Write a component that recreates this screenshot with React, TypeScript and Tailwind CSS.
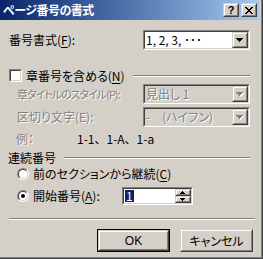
const face = "#D4D0C8";

function Sunken({ className = "", inner = "", children }: { className?: string; inner?: string; children?: React.ReactNode }) {
  return (
    <div className={`border border-t-[#808080] border-l-[#808080] border-b-white border-r-white ${className}`}>
      <div className={`h-full border border-t-[#404040] border-l-[#404040] border-b-[#D4D0C8] border-r-[#D4D0C8] ${inner}`}>
        {children}
      </div>
    </div>
  );
}

function Raised({ className = "", children }: { className?: string; children?: React.ReactNode }) {
  return (
    <div className={`border border-t-[#D4D0C8] border-l-[#D4D0C8] border-b-[#404040] border-r-[#404040] bg-[#D4D0C8] ${className}`}>
      <div className="h-full border border-t-white border-l-white border-b-[#808080] border-r-[#808080] flex items-center justify-center">
        {children}
      </div>
    </div>
  );
}

function Arrow({ disabled = false, small = false, up = false }: { disabled?: boolean; small?: boolean; up?: boolean }) {
  const rows = small ? [5, 3, 1] : [7, 5, 3, 1];
  const w = rows[0];
  const list = up ? [...rows].reverse() : rows;
  const fill = disabled ? "#808080" : "#000";
  return (
    <svg width={w + 1} height={list.length + 1} shapeRendering="crispEdges">
      {disabled &&
        list.map((r, i) => <rect key={"s" + i} x={(w - r) / 2 + 1} y={i + 1} width={r} height={1} fill="#fff" />)}
      {list.map((r, i) => (
        <rect key={i} x={(w - r) / 2} y={i} width={r} height={1} fill={fill} />
      ))}
    </svg>
  );
}

function Combo({ text, disabled = false }: { text: string; disabled?: boolean }) {
  return (
    <Sunken className="w-[107px] h-[20px]" inner={`flex ${disabled ? "bg-[#D4D0C8]" : "bg-white"}`}>
      <span
        className={`flex-1 pl-[1px] leading-[16px] whitespace-nowrap ${
          disabled ? "text-[#808080] [text-shadow:1px_1px_0_#fff]" : "text-black"
        }`}
      >
        {text}
      </span>
      <Raised className="w-[16px] h-[16px]">
        <Arrow disabled={disabled} />
      </Raised>
    </Sunken>
  );
}

function Etched({ className = "" }: { className?: string }) {
  return <div className={`h-[2px] border-t border-t-[#808080] border-b border-b-white ${className}`} />;
}

function U({ c }: { c: string }) {
  return <span className="underline underline-offset-2">{c}</span>;
}

const dim = "text-[#808080] [text-shadow:1px_1px_0_#fff]";

export default function App() {
  return (
    <div
      className="w-[263px] h-[259px] bg-[#D4D0C8] border-r border-b border-r-[#404040] border-b-[#404040] font-['Noto_Sans_CJK_JP',sans-serif] text-[12px] text-black [font-feature-settings:'palt']"
    >
      <div className="h-full border-r border-b border-r-[#808080] border-b-[#808080] pr-[2px] pb-[2px] flex flex-col">
        {/* title bar */}
        <div className="h-[20px] flex items-center bg-linear-to-r from-[#0A246A] to-[#A6CAF0] pl-[3px] pr-[2px]">
          <span className="flex-1 text-white font-bold text-[12px] leading-none tracking-[-0.5px]">ページ番号の書式</span>
          <Raised className="w-[16px] h-[14px]">
            <span className="font-['Liberation_Sans',sans-serif] font-bold text-[11px] leading-none">?</span>
          </Raised>
          <Raised className="w-[16px] h-[14px] ml-[2px]">
            <svg width="8" height="7" shapeRendering="crispEdges">
              <path d="M0 0h2v1h-2zM6 0h2v1h-2zM1 1h2v1h-2zM5 1h2v1h-2zM2 2h4v1h-4zM3 3h2v1h-2zM2 4h4v1h-4zM1 5h2v1h-2zM5 5h2v1h-2zM0 6h2v1h-2zM6 6h2v1h-2z" fill="#000" />
            </svg>
          </Raised>
        </div>

        {/* number format */}
        <div className="mt-[10px] h-[20px] flex items-center">
          <span className="w-[143px] pl-[9px]">
            番号書式(<U c="F" />):
          </span>
          <Combo text="1, 2, 3, ･･･" />
        </div>

        {/* include chapter */}
        <div className="mt-[19px] h-[13px] flex items-center">
          <Sunken className="ml-[9px] w-[13px] h-[13px]" inner="bg-white" />
          <span className="ml-[4px] whitespace-nowrap leading-none">
            章番号を含める(<U c="N" />)
          </span>
          <Etched className="flex-1 ml-[8px] mr-[9px]" />
        </div>

        <div className="mt-[2px] h-[20px] flex items-center">
          <span className="w-[143px] pl-[17px]">
            <span className={`whitespace-nowrap text-[11px] tracking-[-1px] ${dim}`}>章タイトルのスタイル(P):</span>
          </span>
          <Combo text="見出し 1" disabled />
        </div>
        <div className="mt-[3px] h-[20px] flex items-center">
          <span className={`w-[143px] pl-[17px] whitespace-nowrap ${dim}`}>区切り文字(E):</span>
          <Combo text="-　(ハイフン)" disabled />
        </div>

        <div className="mt-[4px] h-[16px] flex items-center">
          <span className={`w-[77px] pl-[16px] ${dim}`}>例：</span>
          <span className="[font-feature-settings:normal]">1-1、1-A、1-a</span>
        </div>

        {/* continuous numbering */}
        <div className="mt-[4px] h-[14px] flex items-center">
          <span className="pl-[8px] whitespace-nowrap">連続番号</span>
          <Etched className="flex-1 ml-[8px] mr-[9px]" />
        </div>

        <div className="mt-[2px] h-[14px] flex items-center">
          <div className="ml-[17px] w-[12px] h-[12px] rounded-full border border-t-[#808080] border-l-[#808080] border-b-white border-r-white">
            <div className="h-full rounded-full border border-t-[#404040] border-l-[#404040] border-b-[#D4D0C8] border-r-[#D4D0C8] bg-white" />
          </div>
          <span className="ml-[4px] whitespace-nowrap">
            前のセクションから継続(<U c="C" />)
          </span>
        </div>

        <div className="mt-[6px] h-[18px] flex items-center">
          <div className="w-[122px] flex items-center">
            <div className="ml-[17px] w-[12px] h-[12px] rounded-full border border-t-[#808080] border-l-[#808080] border-b-white border-r-white">
              <div className="h-full rounded-full border border-t-[#404040] border-l-[#404040] border-b-[#D4D0C8] border-r-[#D4D0C8] bg-white flex items-center justify-center">
                <div className="w-[4px] h-[4px] rounded-full bg-black" />
              </div>
            </div>
            <span className="ml-[4px] whitespace-nowrap">
              開始番号(<U c="A" />):
            </span>
          </div>
          <Sunken className="w-[71px] h-[18px]" inner="bg-white flex items-center">
            <div className="flex-1 pl-[1px] flex items-center">
              <span className="bg-[#0A246A] text-white leading-[12px] px-[1px]">1</span>
            </div>
            <div className="w-[16px] h-full flex flex-col">
              <Raised className="h-[7px]">
                <Arrow small up />
              </Raised>
              <Raised className="h-[7px]">
                <Arrow small />
              </Raised>
            </div>
          </Sunken>
        </div>

        <Etched className="mt-[13px] ml-[9px] w-[246px]" />

        <div className="mt-[9px] flex">
          <div className="ml-[97px] w-[73px] h-[23px] border border-black">
            <Raised className="h-full">
              <span className="font-['Liberation_Sans',sans-serif]">OK</span>
            </Raised>
          </div>
          <Raised className="ml-[10px] w-[73px] h-[23px]">キャンセル</Raised>
        </div>
      </div>
    </div>
  );
}
